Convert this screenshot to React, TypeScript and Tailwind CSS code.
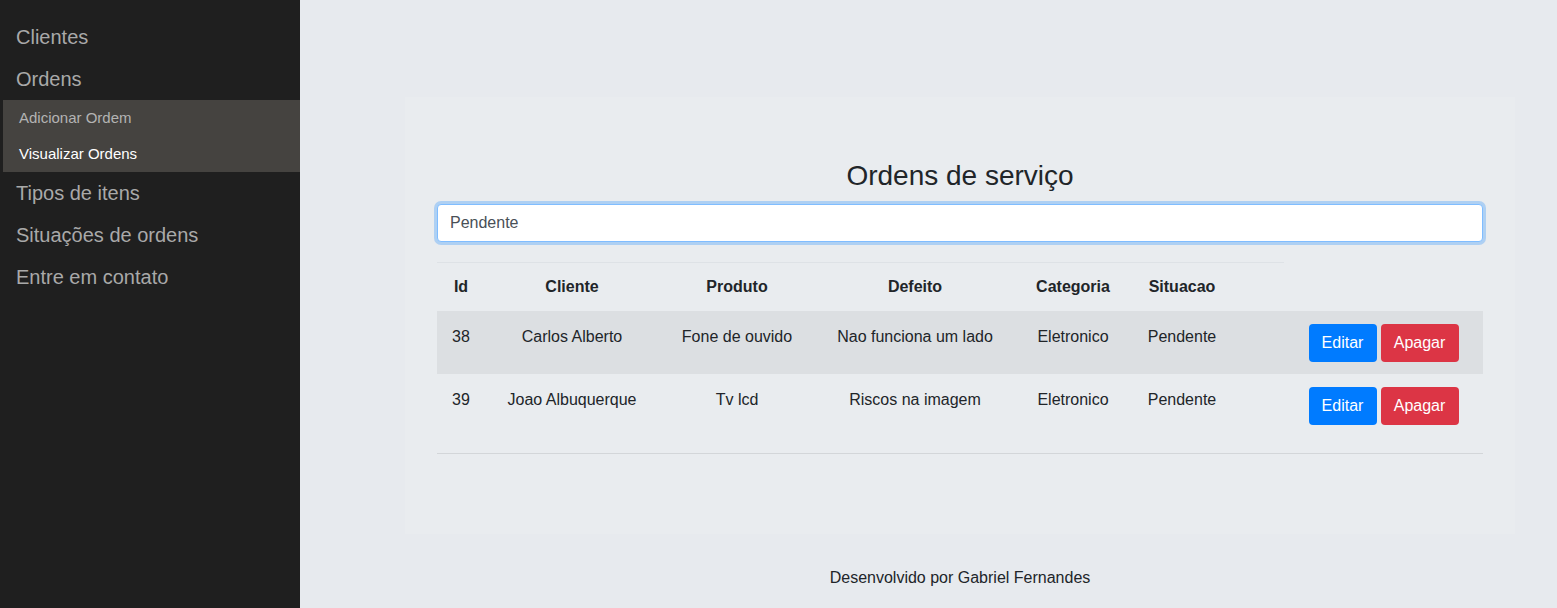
import React from "react";

const ordens = [
  { id: 38, cliente: "Carlos Alberto", produto: "Fone de ouvido", defeito: "Nao funciona um lado", categoria: "Eletronico", situacao: "Pendente" },
  { id: 39, cliente: "Joao Albuquerque", produto: "Tv lcd", defeito: "Riscos na imagem", categoria: "Eletronico", situacao: "Pendente" },
];

const headers = ["Id", "Cliente", "Produto", "Defeito", "Categoria", "Situacao"];

export default function App() {
  return (
    <div className="flex min-h-[608px] w-full font-['Liberation_Sans',Arial,sans-serif] text-[#212529]">
      {/* sidebar */}
      <nav className="w-[300px] shrink-0 bg-[#1f1f1f] pt-4 text-[20px]">
        <a className="block pl-4 py-[6px] leading-[30px] text-[#a9a9a9]">Clientes</a>
        <a className="block pl-4 py-[6px] leading-[30px] text-[#a9a9a9]">Ordens</a>
        <div className="ml-[3px] bg-[#454340] text-[15px]">
          <a className="block pl-4 h-9 leading-9 text-[#b3b3b3]">Adicionar Ordem</a>
          <a className="block pl-4 h-9 leading-9 text-white">Visualizar Ordens</a>
        </div>
        <a className="block pl-4 py-[6px] leading-[30px] text-[#a9a9a9]">Tipos de itens</a>
        <a className="block pl-4 py-[6px] leading-[30px] text-[#a9a9a9]">Situações de ordens</a>
        <a className="block pl-4 py-[6px] leading-[30px] text-[#a9a9a9]">Entre em contato</a>
      </nav>

      {/* main */}
      <main className="flex-1 bg-[#e7eaee] pt-[97px]">
        <div className="ml-[105px] w-[1110px] bg-[#e9ecef] px-8 pt-[62px] pb-20">
          <h1 className="mb-[11px] text-center text-[28px] leading-[34px]">Ordens de serviço</h1>
          <input
            defaultValue="Pendente"
            className="block h-[38px] w-full rounded border border-[#80bdff] bg-white px-3 text-[16px] text-[#495057] shadow-[0_0_0_3px_rgba(0,123,255,0.25)] outline-none"
          />

          <div className="mt-5 grid grid-cols-[48px_174px_156px_200px_116px_153px_199px] text-[16px] leading-6">
            {headers.map((h, i) => (
              <div
                key={h}
                className={
                  i === 5
                    ? "border-t border-[#dee2e6] py-3 pr-[51px] text-center font-bold"
                    : "border-t border-[#dee2e6] py-3 text-center font-bold"
                }
              >
                {h}
              </div>
            ))}
            <div />

            {ordens.map((o, idx) => (
              <React.Fragment key={o.id}>
                {[o.id, o.cliente, o.produto, o.defeito, o.categoria, o.situacao].map((v, i) => (
                  <div
                    key={i}
                    className={
                      (idx === 0 ? "bg-[#dcdfe2] " : "") +
                      (i === 5 ? "pt-[14px] pr-[51px] text-center" : "pt-[14px] text-center")
                    }
                  >
                    {v}
                  </div>
                ))}
                <div className={(idx === 0 ? "bg-[#dcdfe2] " : "") + "flex h-[63px] items-start justify-center gap-1 pt-[13px]"}>
                  <button className="h-[38px] w-[68px] rounded bg-[#007bff] text-white">Editar</button>
                  <button className="h-[38px] w-[78px] rounded bg-[#dc3545] text-white">Apagar</button>
                </div>
              </React.Fragment>
            ))}
          </div>
          <div className="h-[17px] border-b border-[#d3d6d9]" />
        </div>

        <footer className="ml-[105px] w-[1110px] pt-[32px] text-center text-[16px]">Desenvolvido por Gabriel Fernandes</footer>
      </main>
    </div>
  );
}
